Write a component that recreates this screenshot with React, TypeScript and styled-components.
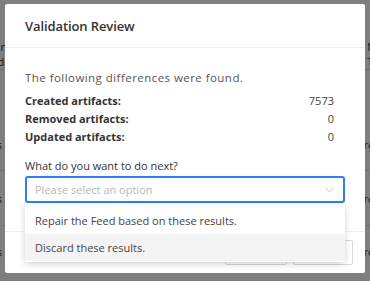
import styled, { createGlobalStyle } from 'styled-components';

const GlobalStyle = createGlobalStyle`
  html, body {
    margin: 0;
    padding: 0;
    width: 370px;
    height: 281px;
    overflow: hidden;
    background: #ffffff;
    font-family: 'Open Sans', 'Noto Sans', sans-serif;
    color: #333333;
  }
`;

const Page = styled.div`
  position: relative;
  width: 370px;
  height: 281px;
  overflow: hidden;
`;

const BgTable = styled.div`
  display: flex;
  flex-direction: column;
  margin-left: -30px;
  width: 428px;
  padding-top: 40px;
  font-size: 11px;
  color: #333;
`;

const BgRow = styled.div<{ h: number; line?: boolean }>`
  height: ${({ h }) => h}px;
  box-sizing: border-box;
  border-bottom: 1px solid ${({ line }) => (line ? '#dddddd' : 'transparent')};
  display: flex;
  justify-content: space-between;
  align-items: center;
`;

const BgCell = styled.div`
  display: flex;
  flex-direction: column;
  gap: 1px;
  line-height: 14px;
`;

const Overlay = styled.div`
  position: absolute;
  inset: 0;
  background: rgba(0, 0, 0, 0.5);
`;

const Modal = styled.div`
  position: absolute;
  left: 5px;
  top: 4px;
  width: 360px;
  height: 269px;
  background: #ffffff;
  border-radius: 2px;
  display: flex;
  flex-direction: column;
`;

const Header = styled.div`
  height: 44px;
  box-sizing: border-box;
  padding: 1px 20px 0;
  display: flex;
  align-items: center;
  border-bottom: 1px solid #ececec;
  font-size: 13px;
  font-weight: 600;
  letter-spacing: -0.1px;
  color: #333;
`;

const Body = styled.div`
  flex: 1;
  padding: 21px 20px 0;
  font-size: 11px;
  line-height: 18px;
  display: flex;
  flex-direction: column;
`;

const Intro = styled.div`
  font-size: 11.5px;
  letter-spacing: 0.45px;
  color: #555;
  margin-bottom: 5px;
`;

const Stats = styled.div`
  display: grid;
  grid-template-columns: 1fr auto;
  padding-right: 11px;
  margin-bottom: 11px;
`;

const StatLabel = styled.div`
  font-weight: 700;
  color: #333;
`;

const StatValue = styled.div`
  text-align: right;
  color: #444;
`;

const FieldLabel = styled.div`
  color: #333;
  margin-bottom: 1px;
`;

const SelectWrap = styled.div`
  position: relative;
`;

const SelectBox = styled.div`
  height: 27px;
  box-sizing: border-box;
  border: 2px solid #2f7cf3;
  border-radius: 3px;
  padding: 0 9px 0 8px;
  display: flex;
  align-items: center;
  justify-content: space-between;
`;

const Placeholder = styled.span`
  color: #b8b8b8;
`;

const Menu = styled.div`
  position: absolute;
  top: 28px;
  left: 0;
  right: 0;
  background: #ffffff;
  padding: 3px 0 1px;
  box-shadow: 0 2px 6px rgba(0, 0, 0, 0.18);
  border-radius: 2px;
  z-index: 2;
`;

const Option = styled.div<{ active?: boolean }>`
  height: 27px;
  display: flex;
  align-items: center;
  padding: 0 10px;
  color: #444;
  background: ${({ active }) => (active ? '#f4f4f4' : '#ffffff')};
`;

const Footer = styled.div`
  height: 42px;
  box-sizing: border-box;
  border-top: 1px solid #ececec;
  padding: 8px 12px 8px;
  display: flex;
  justify-content: flex-end;
  gap: 6px;
`;

const Button = styled.button<{ w: number }>`
  width: ${({ w }) => w}px;
  height: 25px;
  border: 1px solid #d9d9d9;
  border-radius: 2px;
  background: #ffffff;
  font-family: inherit;
  font-size: 12px;
  color: #333;
`;

function Chevron() {
  return (
    <svg width="9" height="6" viewBox="0 0 9 6" fill="none">
      <path d="M0.5 0.8 L4.5 4.8 L8.5 0.8" stroke="#c4c4c4" strokeWidth="1" />
    </svg>
  );
}

export default function App() {
  const stats = [
    { label: 'Created artifacts:', value: 7573 },
    { label: 'Removed artifacts:', value: 0 },
    { label: 'Updated artifacts:', value: 0 },
  ];
  return (
    <Page>
      <GlobalStyle />
      <BgTable>
        <BgRow h={30} line>
          <BgCell><span>Feed info</span><span>Feed data</span></BgCell>
          <BgCell><span>Name</span><span>Type</span></BgCell>
        </BgRow>
        <BgRow h={49} />
        <BgRow h={52} line><span>Status</span><span>results</span></BgRow>
        <BgRow h={55} line><span>Status</span><span>results</span></BgRow>
        <BgRow h={52}><span>Status</span><span>results</span></BgRow>
      </BgTable>
      <Overlay />
      <Modal>
        <Header>Validation Review</Header>
        <Body>
          <Intro>The following differences were found.</Intro>
          <Stats>
            {stats.map((s) => [
              <StatLabel key={s.label}>{s.label}</StatLabel>,
              <StatValue key={s.label + 'v'}>{s.value}</StatValue>,
            ])}
          </Stats>
          <FieldLabel>What do you want to do next?</FieldLabel>
          <SelectWrap>
            <SelectBox>
              <Placeholder>Please select an option</Placeholder>
              <Chevron />
            </SelectBox>
            <Menu>
              <Option>Repair the Feed based on these results.</Option>
              <Option active>Discard these results.</Option>
            </Menu>
          </SelectWrap>
        </Body>
        <Footer>
          <Button w={62}>Cancel</Button>
          <Button w={60}>Apply</Button>
        </Footer>
      </Modal>
    </Page>
  );
}
